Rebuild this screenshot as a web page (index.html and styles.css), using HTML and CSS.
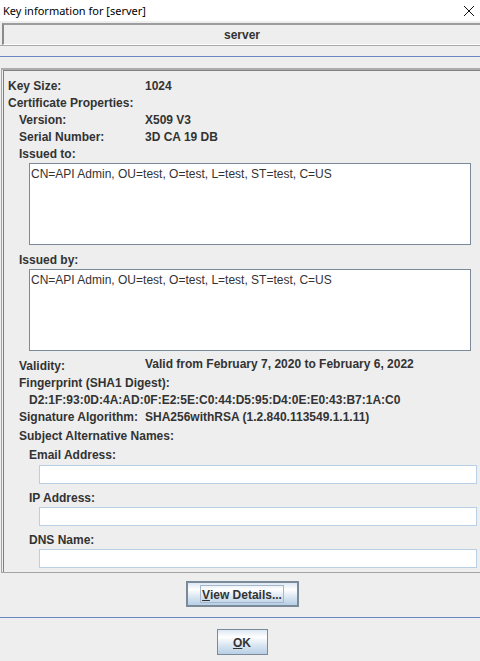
FILE: index.html
```html
<!DOCTYPE html>
<html>
<head>
<meta charset="utf-8">
<link rel="stylesheet" href="styles.css">
</head>
<body>
<div class="window">
  <div class="titlebar">
    <span class="title">Key information for [server]</span>
    <svg class="close" width="12" height="12" viewBox="0 0 12 12"><path d="M1 1 L11 11 M11 1 L1 11" stroke="#111" stroke-width="1" fill="none"/></svg>
  </div>
  <div class="header">server</div>
  <div class="header-line"></div>
  <div class="sep sep-top"></div>
  <div class="panel">
    <div class="panel-inner">
      <div class="row"><span class="k i1">Key Size:</span><span class="v">1024</span></div>
      <div class="row"><span class="k i1">Certificate Properties:</span></div>
      <div class="row"><span class="k i2">Version:</span><span class="v">X509 V3</span></div>
      <div class="row"><span class="k i2">Serial Number:</span><span class="v">3D CA 19 DB</span></div>
      <div class="row"><span class="k i2">Issued to:</span></div>
      <div class="area">CN=API Admin, OU=test, O=test, L=test, ST=test, C=US</div>
      <div class="row gap6"><span class="k i2">Issued by:</span></div>
      <div class="area">CN=API Admin, OU=test, O=test, L=test, ST=test, C=US</div>
      <div class="row gap6"><span class="k i2">Validity:</span><span class="v raised">Valid from February 7, 2020 to February 6, 2022</span></div>
      <div class="row"><span class="k i2">Fingerprint (SHA1 Digest):</span></div>
      <div class="row"><span class="k i3 wide">D2:1F:93:0D:4A:AD:0F:E2:5E:C0:44:D5:95:D4:0E:E0:43:B7:1A:C0</span></div>
      <div class="row"><span class="k i2">Signature Algorithm:</span><span class="v">SHA256withRSA (1.2.840.113549.1.1.11)</span></div>
      <div class="row gap2"><span class="k i2">Subject Alternative Names:</span></div>
      <div class="row gap2"><span class="k i3">Email Address:</span></div>
      <div class="field gap2"></div>
      <div class="row gap5"><span class="k i3">IP Address:</span></div>
      <div class="field gap1"></div>
      <div class="row gap5"><span class="k i3">DNS Name:</span></div>
      <div class="field gap1"></div>
    </div>
  </div>
  <div class="btnrow btnrow-top">
    <button class="btn btn-default"><span class="focus"><u>V</u>iew Details...</span></button>
  </div>
  <div class="sep sep-mid"></div>
  <div class="btnrow btnrow-bottom">
    <button class="btn btn-ok"><span class="ok-label"><u>O</u>K</span></button>
  </div>
</div>
</body>
</html>
```
FILE: styles.css
```css
html, body {
  margin: 0;
  padding: 0;
}
body {
  width: 480px;
  height: 661px;
  overflow: hidden;
  background: #eeeeee;
  font-family: "Liberation Sans", Arial, sans-serif;
  font-size: 12px;
  color: #333333;
}
.window {
  display: flex;
  flex-direction: column;
  height: 661px;
}
.titlebar {
  height: 21px;
  background: #ffffff;
  display: flex;
  align-items: center;
  justify-content: space-between;
  padding: 0 3px 0 3px;
}
.title {
  font-family: "Noto Sans", "Open Sans", sans-serif;
  font-size: 11px;
  color: #000000;
  line-height: 16px;
}
.close {
  margin-right: 2px;
}
.header {
  margin: 2px 0 0 2px;
  height: 19px;
  border-top: 2px solid #9c9c9c;
  border-left: 2px solid #8a8a8a;
  border-bottom: 1px solid #ffffff;
  font-weight: bold;
  text-align: center;
  line-height: 19px;
  padding-top: 1px;
  box-sizing: content-box;
  height: 18px;
}
.header-line {
  height: 1px;
  background: #a9a9a9;
}
.sep {
  height: 1px;
  background: #6b87c1;
}
.sep-top {
  margin-top: 10px;
}
.panel {
  margin-top: 11px;
  margin-left: 1px;
  border-top: 2px solid #acacac;
  border-left: 1px solid #a4a4a4;
  border-bottom: 1px solid #a4a4a4;
}
.panel-inner {
  margin-left: 1px;
  border-top: 1px solid #808080;
  border-left: 1px solid #808080;
  padding: 6px 0 4px 0;
  display: flex;
  flex-direction: column;
}
.row {
  display: grid;
  grid-template-columns: 141px 1fr;
  height: 17px;
  line-height: 17px;
  font-weight: bold;
  white-space: nowrap;
}
.k, .v {
  padding-top: 1px;
}
.k.i1 { padding-left: 4px; }
.k.i2 { padding-left: 15px; }
.k.i3 { padding-left: 25px; }
.k.wide { grid-column: 1 / 3; }
.v.raised { margin-top: -2px; }
.gap1 { margin-top: 1px; }
.gap2 { margin-top: 2px; }
.gap5 { margin-top: 5px; }
.gap6 { margin-top: 6px; }
.area {
  margin: 1px 9px 0 25px;
  border: 1px solid #7a8a99;
  background: #ffffff;
  padding: 3px 0 0 1px;
  box-sizing: border-box;
  height: 82px;
  line-height: 15px;
  font-weight: normal;
  color: #333333;
  white-space: nowrap;
}
.field {
  margin-left: 35px;
  margin-right: 3px;
  height: 19px;
  box-sizing: border-box;
  border: 1px solid #b8cfe5;
  background: #ffffff;
}
.btnrow {
  display: flex;
  justify-content: center;
}
.btnrow-top {
  margin-top: 8px;
  padding-left: 4px;
}
.sep-mid {
  margin-top: 10px;
}
.btnrow-bottom {
  margin-top: 11px;
  padding-left: 4px;
}
.btn {
  font-family: "Liberation Sans", Arial, sans-serif;
  font-size: 12px;
  font-weight: bold;
  color: #333333;
  box-sizing: border-box;
  height: 26px;
  padding: 0;
  margin: 0;
  display: flex;
  align-items: center;
  justify-content: center;
  background: linear-gradient(to bottom, #dde8f3 0%, #ffffff 30%, #dde8f3 60%, #b8cfe5 100%);
}
.btn u {
  text-decoration: underline;
}
.btn-default {
  width: 113px;
  border: 2px solid #7a8a99;
}
.focus {
  display: block;
  border: 1px solid #a3b8cc;
  padding: 1px 1px 0 1px;
  height: 17px;
  line-height: 16px;
  box-sizing: border-box;
  height: 18px;
}
.ok-label {
  display: block;
  padding-top: 2px;
  line-height: 16px;
}
.btn-ok {
  width: 51px;
  border: 1px solid #7a8a99;
}
```
